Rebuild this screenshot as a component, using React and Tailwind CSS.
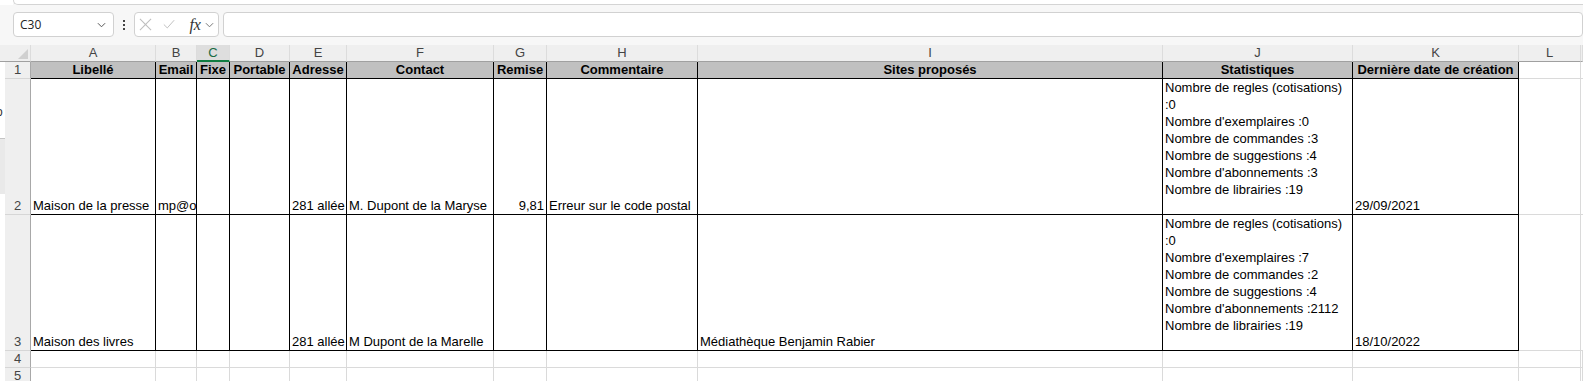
import React from 'react';

const COLUMNS = ['A', 'B', 'C', 'D', 'E', 'F', 'G', 'H', 'I', 'J', 'K', 'L', ''];

const HEADERS = [
  'Libellé',
  'Email',
  'Fixe',
  'Portable',
  'Adresse',
  'Contact',
  'Remise',
  'Commentaire',
  'Sites proposés',
  'Statistiques',
  'Dernière date de création',
];

const ROWS = [
  {
    num: 2,
    cells: [
      'Maison de la presse',
      'mp@o',
      '',
      '',
      '281 allée',
      'M. Dupont de la Maryse',
      '9,81',
      'Erreur sur le code postal',
      '',
      [
        'Nombre de regles (cotisations)',
        ':0',
        "Nombre d'exemplaires :0",
        'Nombre de commandes :3',
        'Nombre de suggestions :4',
        "Nombre d'abonnements :3",
        'Nombre de librairies :19',
      ],
      '29/09/2021',
    ],
  },
  {
    num: 3,
    cells: [
      'Maison des livres',
      '',
      '',
      '',
      '281 allée',
      'M Dupont de la Marelle',
      '',
      '',
      'Médiathèque Benjamin Rabier',
      [
        'Nombre de regles (cotisations)',
        ':0',
        "Nombre d'exemplaires :7",
        'Nombre de commandes :2',
        'Nombre de suggestions :4',
        "Nombre d'abonnements :2112",
        'Nombre de librairies :19',
      ],
      '18/10/2022',
    ],
  },
];

const Chevron = ({ className }) => (
  <svg viewBox="0 0 10 6" className={className} fill="none" stroke="currentColor" strokeWidth="1.1">
    <polyline points="1,1 5,5 9,1" />
  </svg>
);

const RowHeader = ({ children, bottom = false }) => (
  <div
    className={
      bottom
        ? 'flex items-end justify-center pl-[5px] bg-[#efefef] border-r border-b border-r-[#a8a8a8] border-b-[#d6d6d6] leading-[17px] text-[#444]'
        : 'flex items-center justify-center pl-[5px] bg-[#efefef] border-r border-b border-r-[#a8a8a8] border-b-[#d6d6d6] leading-[16px] text-[#444]'
    }
  >
    {children}
  </div>
);

const App = () => {
  return (
    <div className="relative w-[1583px] h-[381px] overflow-hidden bg-[#f7f7f7] font-['Liberation_Sans',Arial,sans-serif] text-[13px] text-black">
      {/* ribbon edge */}
      <div className="h-[5px] flex">
        <div className="w-[13px] bg-white" />
        <div className="flex-1 bg-white border-l border-b border-[#d4d4d4] rounded-bl-[5px]" />
      </div>

      {/* formula bar */}
      <div className="mt-[7px] h-[25px] flex items-stretch">
        <div className="ml-[13px] w-[102px] flex items-center justify-between bg-white border border-[#d1d1d1] rounded-[4px] pl-[6px] pr-[7px]">
          <span className="text-[12px] text-[#222] font-['Open_Sans',sans-serif]">C30</span>
          <Chevron className="w-[9px] h-[6px] text-[#555]" />
        </div>
        <div className="w-[21px] flex flex-col items-center justify-center gap-[2px]">
          <span className="w-[2px] h-[2px] bg-[#444]" />
          <span className="w-[2px] h-[2px] bg-[#444]" />
          <span className="w-[2px] h-[2px] bg-[#444]" />
        </div>
        <div className="w-[86px] flex items-center bg-white border border-[#d1d1d1] rounded-[4px] pl-[4px]">
          <svg viewBox="0 0 14 14" className="w-[13px] h-[13px] text-[#bdbdbd]" fill="none" stroke="currentColor" strokeWidth="1.1">
            <line x1="1" y1="1" x2="13" y2="13" />
            <line x1="13" y1="1" x2="1" y2="13" />
          </svg>
          <svg viewBox="0 0 14 12" className="ml-[11px] w-[12px] h-[11px] text-[#bdbdbd]" fill="none" stroke="currentColor" strokeWidth="1.1">
            <polyline points="1,6 5,10 13,1" />
          </svg>
          <span className="ml-[14px] font-['Liberation_Serif',serif] italic text-[16px] leading-none text-[#333]">fx</span>
          <Chevron className="ml-[4px] w-[9px] h-[6px] text-[#777]" />
        </div>
        <div className="ml-[4px] w-[1380px] bg-white border border-[#d1d1d1] rounded-[4px]" />
      </div>

      {/* sheet */}
      <div className="mt-[8px] grid grid-cols-[31px_125px_41px_33px_60px_57px_147px_53px_151px_465px_190px_166px_62px_1fr] grid-rows-[17px_17px_136px_136px_17px_17px]">
        {/* column headers */}
        <div className="relative bg-[#efefef] border-r border-b border-r-[#dcdcdc] border-b-[#a0a0a0]">
          <svg viewBox="0 0 10 10" className="absolute right-[2px] bottom-[2px] w-[10px] h-[10px] text-[#d0d0d0]" fill="currentColor">
            <polygon points="10,0 10,10 0,10" />
          </svg>
        </div>
        {COLUMNS.map((c) =>
          c === 'C' ? (
            <div
              key="C"
              className="flex items-center justify-center bg-[#dedede] border-r border-b-2 border-r-[#dcdcdc] border-b-[#107c41] text-[#1a6b43] leading-[15px]"
            >
              {c}
            </div>
          ) : (
            <div
              key={c || 'M'}
              className="flex items-center justify-center bg-[#efefef] border-r border-b border-r-[#dcdcdc] border-b-[#a0a0a0] text-[#444] leading-[16px]"
            >
              {c}
            </div>
          )
        )}

        {/* row 1: table headers */}
        <RowHeader>1</RowHeader>
        {HEADERS.map((h) => (
          <div
            key={h}
            className="flex items-center justify-center bg-[#c0c0c0] border-r border-b border-black font-bold leading-[16px] whitespace-nowrap overflow-hidden"
          >
            {h}
          </div>
        ))}
        <div className="bg-white border-r border-b border-[#dadada]" />
        <div className="bg-white border-b border-[#dadada]" />

        {/* data rows */}
        {ROWS.map((row) => (
          <React.Fragment key={row.num}>
            <RowHeader bottom>{row.num}</RowHeader>
            {row.cells.map((cell, i) =>
              Array.isArray(cell) ? (
                <div key={i} className="bg-white border-r border-b border-black px-[2px] leading-[17px] whitespace-nowrap overflow-hidden">
                  {cell.map((line, j) => (
                    <div key={j}>{line}</div>
                  ))}
                </div>
              ) : i === 6 ? (
                <div key={i} className="flex items-end justify-end bg-white border-r border-b border-black px-[2px] leading-[17px] whitespace-nowrap overflow-hidden">
                  {cell}
                </div>
              ) : (
                <div key={i} className="flex items-end bg-white border-r border-b border-black px-[2px] leading-[17px] whitespace-nowrap overflow-hidden">
                  {cell}
                </div>
              )
            )}
            <div className="bg-white border-r border-b border-[#dadada]" />
            <div className="bg-white border-b border-[#dadada]" />
          </React.Fragment>
        ))}

        {/* empty rows */}
        {[4, 5].map((n) => (
          <React.Fragment key={n}>
            <RowHeader>{n}</RowHeader>
            {COLUMNS.map((c) => (
              <div key={c || 'M'} className="bg-white border-r border-b border-[#dadada]" />
            ))}
          </React.Fragment>
        ))}
      </div>

      {/* side panel edge on the far left */}
      <div className="absolute left-0 top-[62px] w-[5px] h-[319px] flex flex-col">
        <div className="relative h-[77px] bg-white border-b border-[#c4c4c4] overflow-hidden">
          <span className="absolute left-[-4px] top-[44px] text-[12px] leading-none text-[#333]">o</span>
        </div>
        <div className="h-[55px] bg-[#e9e9e9]" />
        <div className="flex-1 bg-white" />
      </div>
    </div>
  );
};

export default App;
